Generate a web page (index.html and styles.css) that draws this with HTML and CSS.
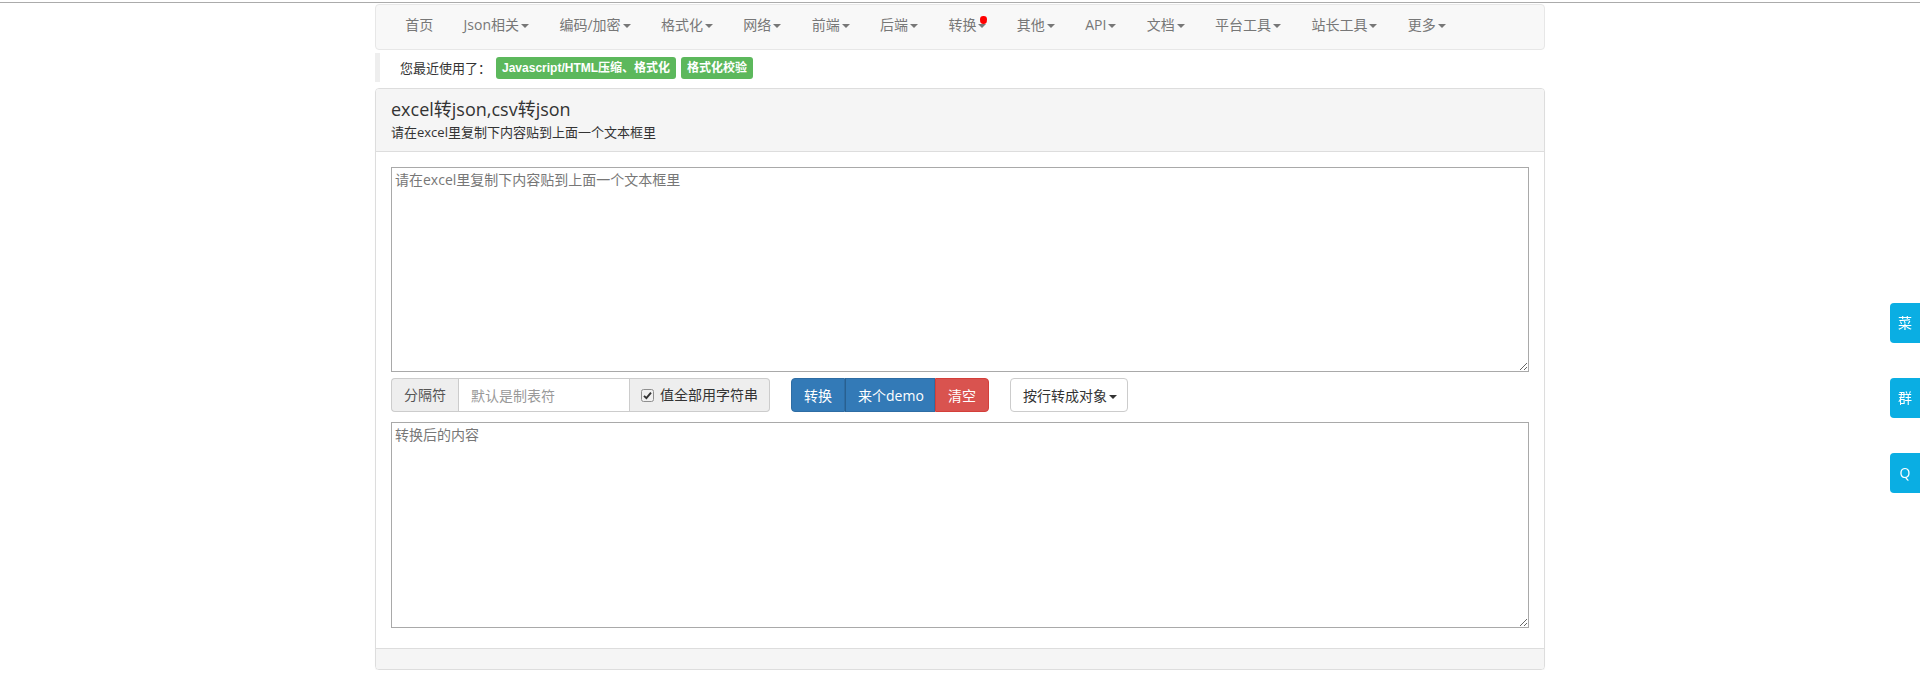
FILE: index.html
```html
<!DOCTYPE html>
<html lang="zh-CN">
<head>
<meta charset="utf-8">
<title>excel转json,csv转json</title>
<link rel="stylesheet" href="styles.css">
</head>
<body>
<div class="topline"></div>
<div class="container">
  <nav class="navbar">
    <ul class="nav">
      <li><a>首页</a></li>
      <li><a>Json相关<span class="caret"></span></a></li>
      <li><a>编码/加密<span class="caret"></span></a></li>
      <li><a>格式化<span class="caret"></span></a></li>
      <li><a>网络<span class="caret"></span></a></li>
      <li><a>前端<span class="caret"></span></a></li>
      <li><a>后端<span class="caret"></span></a></li>
      <li><a class="has-dot">转换<span class="caret"></span><span class="dot"></span></a></li>
      <li><a>其他<span class="caret"></span></a></li>
      <li><a>API<span class="caret"></span></a></li>
      <li><a>文档<span class="caret"></span></a></li>
      <li><a>平台工具<span class="caret"></span></a></li>
      <li><a>站长工具<span class="caret"></span></a></li>
      <li><a>更多<span class="caret"></span></a></li>
    </ul>
  </nav>

  <div class="recent">
    <span class="recent-text">您最近使用了：</span>
    <span class="label">Javascript/HTML压缩、格式化</span>
    <span class="label">格式化校验</span>
  </div>

  <div class="panel">
    <div class="panel-heading">
      <h3 class="panel-title">excel转json,csv转json</h3>
      <div class="panel-sub">请在excel里复制下内容贴到上面一个文本框里</div>
    </div>
    <div class="panel-body">
      <textarea class="box box-in" placeholder="请在excel里复制下内容贴到上面一个文本框里"></textarea>
      <div class="controls">
        <div class="input-group">
          <span class="addon addon-left">分隔符</span>
          <input class="sep-input" type="text" placeholder="默认是制表符">
          <span class="addon addon-right">
            <svg class="chk" width="13" height="13" viewBox="0 0 13 13"><rect x="0.5" y="0.5" width="12" height="12" rx="2" fill="#f0f0f0" stroke="#8f8f8f"/><path d="M3 6.8 L5.4 9.2 L10 3.6" fill="none" stroke="#333" stroke-width="1.9"/></svg>
            值全部用字符串
          </span>
        </div>
        <div class="btn-group">
          <button class="btn btn-primary">转换</button>
          <button class="btn btn-primary btn-mid">来个demo</button>
          <button class="btn btn-danger">清空</button>
        </div>
        <button class="btn btn-default">按行转成对象<span class="caret dark"></span></button>
      </div>
      <textarea class="box box-out" placeholder="转换后的内容"></textarea>
    </div>
    <div class="panel-footer"></div>
  </div>
</div>

<div class="side">
  <a class="side-btn">菜</a>
  <a class="side-btn">群</a>
  <a class="side-btn">Q</a>
</div>
</body>
</html>
```

FILE: styles.css
```css
* { box-sizing: border-box; }

html, body {
  margin: 0;
  padding: 0;
  background: #fff;
}

body {
  font-family: "Open Sans", "Noto Sans CJK SC", sans-serif;
  font-size: 14px;
  color: #333;
  line-height: 20px;
}

.topline {
  margin-top: 2px;
  height: 1px;
  background: #ababab;
}

.container {
  width: 1170px;
  margin: 0 auto;
}

/* navbar */
.navbar {
  margin-top: 1px;
  height: 46px;
  background: #f8f8f8;
  border: 1px solid #e7e7e7;
  border-radius: 4px;
  padding: 0 14px;
}

.nav {
  list-style: none;
  margin: 0;
  padding: 0;
  display: flex;
}

.nav a {
  display: block;
  position: relative;
  padding: 10px 15.2px;
  line-height: 20px;
  color: #777;
  font-size: 14px;
  white-space: nowrap;
}

.caret {
  display: inline-block;
  width: 0;
  height: 0;
  margin-left: 2px;
  vertical-align: middle;
  border-top: 4px solid #777;
  border-left: 4px solid transparent;
  border-right: 4px solid transparent;
}

.caret.dark { border-top-color: #333; }

.dot {
  position: absolute;
  right: 15px;
  top: 11px;
  width: 7px;
  height: 8px;
  background: #f00;
  border-radius: 50% 50% 50% 50% / 45% 45% 60% 60%;
}

/* recent */
.recent {
  margin-top: 3px;
  height: 29px;
  border-left: 5px solid #eee;
  padding-left: 20px;
  display: flex;
  align-items: center;
  gap: 5px;
}

.recent-text {
  font-size: 13px;
}

.label {
  display: inline-block;
  background: #5cb85c;
  color: #fff;
  font-family: "Liberation Sans", "Noto Sans CJK SC", sans-serif;
  font-weight: bold;
  font-size: 12px;
  line-height: 14px;
  padding: 4px 6px;
  border-radius: 3px;
}

/* panel */
.panel {
  margin-top: 6px;
  border: 1px solid #ddd;
  border-radius: 4px;
  box-shadow: 0 1px 1px rgba(0,0,0,.05);
  overflow: hidden;
}

.panel-heading {
  background: #f5f5f5;
  border-bottom: 1px solid #ddd;
  padding: 8px 15px 10px;
}

.panel-title {
  margin: 0;
  font-size: 18px;
  font-weight: normal;
  line-height: 24px;
  color: #333;
}

.panel-sub {
  margin-top: 2px;
  font-size: 13px;
  line-height: 18px;
}

.panel-body {
  padding: 15px 15px 20px;
}

.box {
  display: block;
  width: 100%;
  border: 1px solid #a9a9a9;
  padding: 2px 3px;
  font-family: "Open Sans", "Noto Sans CJK SC", sans-serif;
  font-size: 14px;
  line-height: 20px;
  color: #333;
  margin: 0;
}

.box::placeholder { color: #777; }

.box-in { height: 205px; }
.box-out { height: 206px; margin-top: 10px; }

.controls {
  margin-top: 6px;
  display: flex;
  align-items: center;
  gap: 21px;
}

.input-group {
  display: flex;
  height: 34px;
  width: 379px;
}

.addon {
  display: flex;
  align-items: center;
  background: #eee;
  border: 1px solid #ccc;
  color: #555;
  font-size: 14px;
  padding: 0 12px;
  white-space: nowrap;
}

.addon-left {
  width: 67px;
  border-radius: 4px 0 0 4px;
  border-right: 0;
}

.addon-right {
  flex: 1;
  border-radius: 0 4px 4px 0;
  border-left: 0;
  padding: 0 11px;
  gap: 6px;
  color: #333;
}

.chk { flex: none; }

.sep-input {
  width: 172px;
  height: 34px;
  border: 1px solid #ccc;
  padding: 6px 12px;
  font-family: "Open Sans", "Noto Sans CJK SC", sans-serif;
  font-size: 14px;
  color: #555;
  outline: none;
}

.sep-input::placeholder { color: #999; }

.btn-group { display: flex; }

.btn {
  height: 34px;
  padding: 0 12px;
  font-family: "Open Sans", "Noto Sans CJK SC", sans-serif;
  font-size: 14px;
  border: 1px solid transparent;
  border-radius: 4px;
  cursor: pointer;
  white-space: nowrap;
}

.btn-group .btn { border-radius: 0; }
.btn-group .btn:first-child { border-radius: 4px 0 0 4px; }
.btn-group .btn:last-child { border-radius: 0 4px 4px 0; }

.btn-primary {
  background: #337ab7;
  border-color: #2e6da4;
  color: #fff;
  width: 54px;
}

.btn-mid {
  width: 90px;
  border-left-color: #286090;
}

.btn-danger {
  background: #d9534f;
  border-color: #d43f3a;
  color: #fff;
  width: 54px;
}

.btn-default {
  background: #fff;
  border-color: #ccc;
  color: #333;
  width: 118px;
}

.panel-footer {
  height: 21px;
  background: #f5f5f5;
  border-top: 1px solid #ddd;
}

/* side buttons */
.side {
  position: fixed;
  right: 0;
  top: 303px;
  width: 30px;
  display: flex;
  flex-direction: column;
  gap: 35px;
}

.side-btn {
  display: flex;
  align-items: center;
  justify-content: center;
  width: 30px;
  height: 40px;
  background: #0aaee3;
  color: #fff;
  font-size: 14px;
  border-radius: 4px 0 0 4px;
}
```
